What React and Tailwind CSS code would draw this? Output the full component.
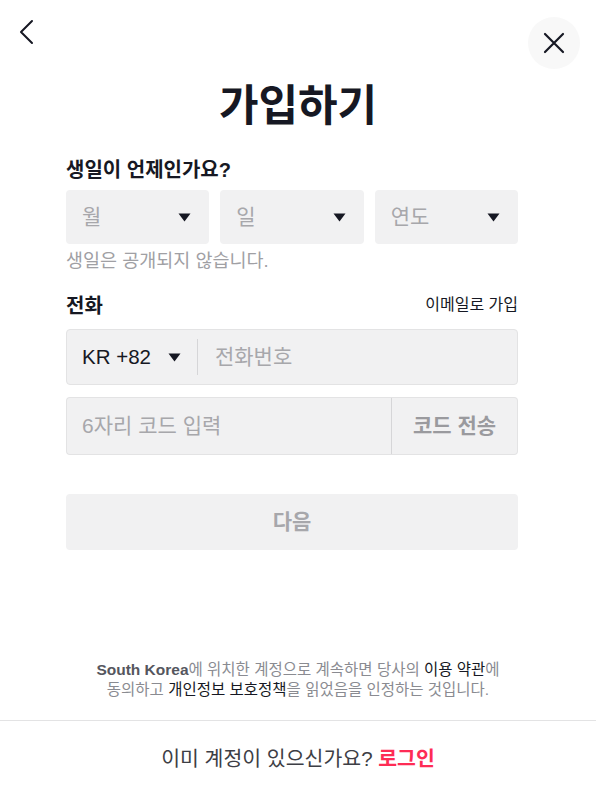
import React from 'react';

const font = { fontFamily: '"Liberation Sans", "Noto Sans CJK KR", sans-serif' };

function Caret() {
  return (
    <svg width="13" height="9" viewBox="0 0 13 9" className="shrink-0">
      <path d="M0.5 0.5 L12.5 0.5 L6.5 8.5 Z" fill="#161823" />
    </svg>
  );
}

function DateSelect({ label }) {
  return (
    <div className="flex-1 h-[54px] rounded-[4px] bg-[#f1f1f2] flex items-center justify-between pl-[16px] pr-[18px]">
      <span className="text-[21px] text-[#a7a7ab]">{label}</span>
      <Caret />
    </div>
  );
}

export default function App() {
  return (
    <div className="w-[596px] h-[797px] bg-white flex flex-col text-[#161823]" style={font}>
      <div className="flex-1 flex flex-col">
        {/* Header */}
        <div className="flex items-start justify-between pl-[14px] pr-[16px] pt-[17px]">
          <button className="mt-[2px] w-[24px] h-[26px] flex items-center justify-center">
            <svg width="16" height="26" viewBox="0 0 16 26" fill="none">
              <path d="M14 2 L3 13 L14 24" stroke="#161823" strokeWidth="2" strokeLinecap="round" strokeLinejoin="round" />
            </svg>
          </button>
          <button className="w-[52px] h-[52px] rounded-full bg-[#f8f8f8] flex items-center justify-center">
            <svg width="24" height="24" viewBox="0 0 24 24" fill="none">
              <path d="M3 3 L21 21 M21 3 L3 21" stroke="#161823" strokeWidth="2.2" strokeLinecap="round" />
            </svg>
          </button>
        </div>

        <h1 className="mt-[11px] text-center text-[43px] leading-[52px] font-bold">가입하기</h1>

        <div className="w-[452px] ml-[66px] flex flex-col">
          <div className="mt-[25px] text-[20px] leading-[26px] font-bold">생일이 언제인가요?</div>
          <div className="mt-[7px] flex gap-[11px]">
            <DateSelect label="월" />
            <DateSelect label="일" />
            <DateSelect label="연도" />
          </div>
          <div className="mt-[5px] text-[18.5px] leading-[24px] text-[#a0a0a4]">생일은 공개되지 않습니다.</div>

          <div className="mt-[20px] flex items-center justify-between">
            <span className="text-[20px] leading-[26px] font-bold">전화</span>
            <span className="text-[16px] leading-[22px] text-[#161823] mb-[3px]">이메일로 가입</span>
          </div>

          <div className="mt-[10px] h-[56px] rounded-[4px] bg-[#f1f1f2] border border-[#e3e3e4] flex items-center">
            <div className="flex items-center gap-[17px] pl-[15px] pr-[16px] h-full">
              <span className="text-[20.5px]">KR +82</span>
              <Caret />
            </div>
            <div className="w-px h-[36px] bg-[#d6d6d8]" />
            <span className="pl-[17px] text-[21px] text-[#a7a7ab]">전화번호</span>
          </div>

          <div className="mt-[12px] h-[58px] flex">
            <div className="flex-1 rounded-l-[4px] bg-[#f1f1f2] border border-[#e3e3e4] border-r-0 flex items-center pl-[15px]">
              <span className="text-[21px] text-[#a7a7ab]">6자리 코드 입력</span>
            </div>
            <button className="w-[127px] rounded-r-[4px] bg-[#f1f1f2] border border-[#e3e3e4] border-l-[#d6d6d8] flex items-center justify-center">
              <span className="text-[21px] font-bold text-[#9a9a9e]">코드 전송</span>
            </button>
          </div>

          <button className="mt-[39px] h-[56px] rounded-[4px] bg-[#f1f1f2] flex items-center justify-center">
            <span className="text-[21px] font-bold text-[#a7a7ab]">다음</span>
          </button>
        </div>

        <div className="flex-1" />

        <p className="mx-auto mb-[20px] text-center text-[15.5px] leading-[20px] text-[#8a8b91]">
          <span className="font-bold text-[#55565e]">South Korea</span>에 위치한 계정으로 계속하면 당사의{' '}
          <span className="text-[#161823]">이용 약관</span>에
          <br />
          동의하고 <span className="text-[#161823]">개인정보 보호정책</span>을 읽었음을 인정하는 것입니다.
        </p>
      </div>

      <div className="h-[77px] border-t border-[#e3e3e4] flex items-center justify-center">
        <span className="text-[20.5px] text-[#3d3e45]">
          이미 계정이 있으신가요? <span className="font-bold text-[#fe2c55]">로그인</span>
        </span>
      </div>
    </div>
  );
}
